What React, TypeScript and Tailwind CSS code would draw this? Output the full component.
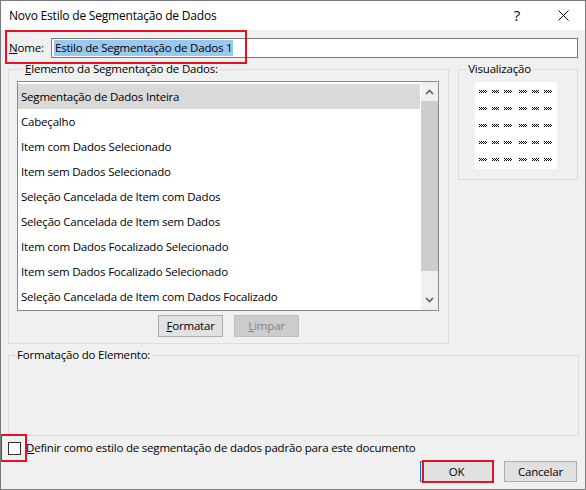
import React from 'react';

const font = { fontFamily: '"Open Sans", "Noto Sans", sans-serif' };

const items = [
  'Segmentação de Dados Inteira',
  'Cabeçalho',
  'Item com Dados Selecionado',
  'Item sem Dados Selecionado',
  'Seleção Cancelada de Item com Dados',
  'Seleção Cancelada de Item sem Dados',
  'Item com Dados Focalizado Selecionado',
  'Item sem Dados Focalizado Selecionado',
  'Seleção Cancelada de Item com Dados Focalizado',
];

// tiny checker glyph used in the preview tile
function Dots({ w }: { w: number }) {
  const cells: React.ReactNode[] = [];
  for (let r = 0; r < 3; r++) {
    for (let c = 0; c < w; c++) {
      if ((r + c) % 2 === 0) cells.push(<rect key={`${r}-${c}`} x={c} y={r} width={1} height={1} fill="#000" />);
    }
  }
  return (
    <svg width={w} height={3} viewBox={`0 0 ${w} 3`} shapeRendering="crispEdges">
      {cells}
    </svg>
  );
}

function PreviewRow() {
  return (
    <div className="flex h-[17px] items-center pl-[4px]">
      <Dots w={8} />
      <div className="ml-[5px]"><Dots w={7} /></div>
      <div className="ml-[5px]"><Dots w={8} /></div>
      <div className="ml-[7px]"><Dots w={8} /></div>
      <div className="ml-[5px]"><Dots w={7} /></div>
      <div className="ml-[5px]"><Dots w={8} /></div>
    </div>
  );
}

function Chevron({ up }: { up?: boolean }) {
  return (
    <svg width="9" height="6" viewBox="0 0 9 6" className={up ? '' : 'rotate-180'}>
      <path d="M1 5 L4.5 1.5 L8 5" fill="none" stroke="#606060" strokeWidth="1.6" />
    </svg>
  );
}

export default function App() {
  return (
    <div className="relative h-[490px] w-[586px] overflow-hidden border border-[#7a7a7a] bg-[#f0f0f0] text-[11.5px] tracking-[-0.2px] text-black" style={font}>
      {/* title bar */}
      <div className="flex h-[29px] items-center bg-white pl-[8px]">
        <span className="flex-1 text-[12px] leading-none">Novo Estilo de Segmentação de Dados</span>
        <span className="mr-[38px] text-[15px] leading-none">?</span>
        <svg width="11" height="11" viewBox="0 0 11 11" className="mr-[16px]">
          <path d="M0.5 0.5 L10.5 10.5 M10.5 0.5 L0.5 10.5" stroke="#000" strokeWidth="1" />
        </svg>
      </div>

      <div className="px-[7px]">
        {/* name row */}
        <div className="mt-[8px] flex h-[20px] items-center">
          <span className="w-[43px] pl-[1px] leading-none">
            <u>N</u>ome:
          </span>
          <div className="flex h-[20px] flex-1 items-center border border-[#7a7a7a] bg-white pl-[2px]">
            <span className="bg-[#99c9ef] px-[1px] leading-[16px]">Estilo de Segmentação de Dados 1</span>
          </div>
        </div>

        {/* two top groups */}
        <div className="mt-[3px] flex items-start">
          <fieldset className="h-[283px] w-[442px] border border-[#dcdcdc] px-[8px]">
            <legend className="ml-[6px] px-[2px] leading-[16px]">
              <u>E</u>lemento da Segmentação de Dados:
            </legend>
            <div className="mt-[4px] flex h-[230px] w-[422px] border border-[#828790] bg-white">
              <div className="w-[402px] pt-[2px]">
                {items.map((t, i) => (
                  <div key={t} className={`flex h-[25px] items-center pl-[3px] ${i === 0 ? 'bg-[#d9d9d9]' : ''}`}>
                    {t}
                  </div>
                ))}
              </div>
              <div className="ml-[1px] flex w-[17px] flex-col bg-[#f0f0f0]">
                <div className="flex h-[19px] items-center justify-center"><Chevron up /></div>
                <div className="h-[170px] bg-[#cdcdcd]" />
                <div className="flex flex-1 items-end justify-center pb-[7px]"><Chevron /></div>
              </div>
            </div>
            <div className="mt-[4px] flex justify-center gap-[11px]">
              <button className="h-[22px] w-[65px] border border-[#adadad] bg-[#e1e1e1] leading-none">
                <u>F</u>ormatar
              </button>
              <button className="h-[22px] w-[65px] border border-[#bfbfbf] bg-[#cccccc] leading-none text-[#838383]">
                <u>L</u>impar
              </button>
            </div>
          </fieldset>

          <fieldset className="ml-[9px] h-[119px] w-[120px] border border-[#dcdcdc] px-[16px]">
            <legend className="ml-[-9px] px-[2px] leading-[16px]">Visualização</legend>
            <div className="mt-[5px] h-[87px] w-[82px] bg-white pt-[1px]">
              <PreviewRow />
              <PreviewRow />
              <PreviewRow />
              <PreviewRow />
              <PreviewRow />
            </div>
          </fieldset>
        </div>

        {/* element formatting group */}
        <fieldset className="mt-[3px] h-[89px] w-[571px] border border-[#dcdcdc]">
          <legend className="ml-[6px] px-[2px] leading-[16px]">Formatação do Elemento:</legend>
        </fieldset>

        {/* default checkbox */}
        <div className="mt-[5px] flex h-[14px] items-center">
          <div className="h-[13px] w-[13px] border border-[#333333] bg-white" />
          <span className="ml-[5px] leading-none">
            <u>D</u>efinir como estilo de segmentação de dados padrão para este documento
          </span>
        </div>

        <div className="mt-[6px] flex justify-end gap-[11px] pr-[1px]">
          <button className="h-[21px] w-[73px] border border-[#0078d7] bg-[#e1e1e1] leading-none">OK</button>
          <button className="h-[21px] w-[73px] border border-[#adadad] bg-[#e1e1e1] leading-none">Cancelar</button>
        </div>
      </div>

      {/* red annotation boxes */}
      <div className="pointer-events-none absolute left-[4px] top-[29px] h-[34px] w-[242px] border-2 border-[#e81123]" />
      <div className="pointer-events-none absolute left-[-1px] top-[433px] h-[28px] w-[27px] border-2 border-[#e81123]" />
      <div className="pointer-events-none absolute left-[421px] top-[459px] h-[23px] w-[72px] border-2 border-[#e81123]" />
    </div>
  );
}
